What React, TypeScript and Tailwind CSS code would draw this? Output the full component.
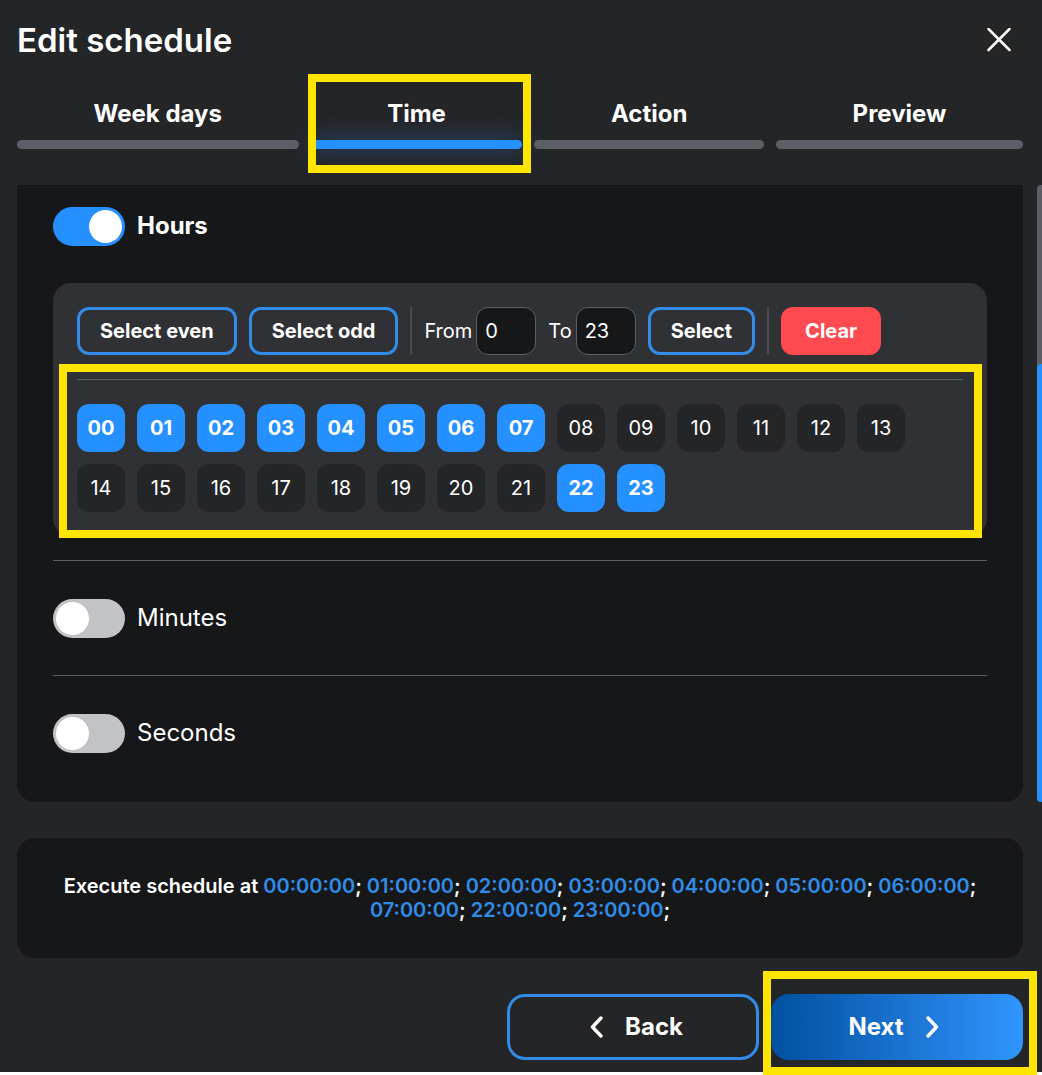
import { useState } from "react";

const tabs = ["Week days", "Time", "Action", "Preview"];
const hours = Array.from({ length: 24 }, (_, i) => String(i).padStart(2, "0"));
const initial = ["00", "01", "02", "03", "04", "05", "06", "07", "22", "23"];

function Highlight({ className }: { className: string }) {
  return (
    <span
      aria-hidden="true"
      className={`pointer-events-none absolute z-10 border-8 border-[#ffe600] ${className}`}
    />
  );
}

function Toggle({
  label,
  checked,
  onChange,
}: {
  label: string;
  checked: boolean;
  onChange: (v: boolean) => void;
}) {
  return (
    <label className="flex w-fit cursor-pointer items-center gap-3 text-2xl">
      <input
        type="checkbox"
        role="switch"
        checked={checked}
        onChange={(e) => onChange(e.target.checked)}
        className="h-[39px] w-[72px] appearance-none rounded-full bg-[#c2c3c7] p-[3px] before:block before:size-[33px] before:rounded-full before:bg-white checked:bg-[#2590ff] checked:before:ml-[33px]"
      />
      <span className={checked ? "pb-0.5 font-bold" : "pb-0.5"}>{label}</span>
    </label>
  );
}

function OutlineButton({ children, onClick }: { children: string; onClick: () => void }) {
  return (
    <button
      type="button"
      onClick={onClick}
      className="h-12 rounded-xl border-3 border-[#318ce7] px-5 font-bold"
    >
      {children}
    </button>
  );
}

const fieldClass =
  "h-12 w-[60px] rounded-xl border border-[#5d5f66] bg-[#161719] px-2 text-white";

export default function App() {
  const [tab, setTab] = useState("Time");
  const [selected, setSelected] = useState<string[]>(initial);
  const [from, setFrom] = useState("0");
  const [to, setTo] = useState("23");
  const [units, setUnits] = useState({ hours: true, minutes: false, seconds: false });

  const toggleHour = (h: string) =>
    setSelected((s) => (s.includes(h) ? s.filter((x) => x !== h) : [...s, h].sort()));

  return (
    <div className="bg-white pb-[3px]">
      <main className="bg-[#242527] pt-4 pb-3 font-['Inter',sans-serif] text-xl text-white">
        <header className="flex h-12 items-center justify-between pr-[27px] pl-[17px]">
          <h1 className="text-[33px] leading-10 font-semibold">Edit schedule</h1>
          <button type="button" aria-label="Close" className="p-1">
            <svg width="24" height="24" viewBox="0 0 24 24" fill="none" stroke="currentColor" strokeWidth="2.5" strokeLinecap="round">
              <path d="M1.5 1 22.5 22M22.5 1 1.5 22" />
            </svg>
          </button>
        </header>

        <div role="tablist" className="mt-8 flex gap-3 pr-[19px] pl-[17px]">
          {tabs.map((t) => (
            <button
              key={t}
              type="button"
              role="tab"
              aria-selected={t === tab}
              onClick={() => setTab(t)}
              className="relative flex flex-auto flex-col text-2xl font-bold"
            >
              <span className="w-full pt-0.5 pb-2.5">{t}</span>
              <span
                className={`h-[9px] w-full rounded-full ${
                  t === tab ? "bg-[#2590ff] shadow-[0_0_24px_#2590ff80]" : "bg-[#5d5f66]"
                }`}
              />
              {t === "Time" && <Highlight className="-top-[22px] -right-[9px] -bottom-6 -left-[3px]" />}
            </button>
          ))}
        </div>

        <div className="mt-9 flex">
          <section className="ml-[17px] flex-1 rounded-b-[18px] bg-[#161719] px-9 pt-[22px] pb-[49px]">
            <Toggle label="Hours" checked={units.hours} onChange={(v) => setUnits({ ...units, hours: v })} />

            <div className="relative mt-[37px] rounded-[18px] bg-[#303134] p-6">
              <div className="flex items-center gap-3">
                <OutlineButton onClick={() => setSelected(hours.filter((h) => +h % 2 === 0))}>
                  Select even
                </OutlineButton>
                <OutlineButton onClick={() => setSelected(hours.filter((h) => +h % 2 === 1))}>
                  Select odd
                </OutlineButton>
                <span className="h-12 w-0.5 bg-[#4b4c50]" />
                <label className="flex items-center gap-1">
                  From
                  <input value={from} onChange={(e) => setFrom(e.target.value)} className={fieldClass} />
                </label>
                <label className="flex items-center gap-1">
                  To
                  <input value={to} onChange={(e) => setTo(e.target.value)} className={fieldClass} />
                </label>
                <OutlineButton onClick={() => setSelected(hours.filter((h) => +h >= +from && +h <= +to))}>
                  Select
                </OutlineButton>
                <span className="h-12 w-0.5 bg-[#4b4c50]" />
                <button
                  type="button"
                  onClick={() => setSelected([])}
                  className="h-12 rounded-xl bg-[#ff4b50] px-6 font-bold"
                >
                  Clear
                </button>
              </div>
              <div className="mt-6 flex flex-wrap gap-3 border-t border-[#5d5f66] pt-6">
                {hours.map((h) => (
                  <button
                    key={h}
                    type="button"
                    aria-pressed={selected.includes(h)}
                    onClick={() => toggleHour(h)}
                    className={`size-12 rounded-xl ${
                      selected.includes(h) ? "bg-[#2590ff] font-bold" : "bg-[#242527]"
                    }`}
                  >
                    {h}
                  </button>
                ))}
              </div>
              <Highlight className="top-[81px] right-[5px] -bottom-[2px] left-1.5" />
            </div>

            <div className="mt-6 border-t border-[#5d5f66] pt-[38px]">
              <Toggle label="Minutes" checked={units.minutes} onChange={(v) => setUnits({ ...units, minutes: v })} />
            </div>
            <div className="mt-[37px] border-t border-[#5d5f66] pt-[38px]">
              <Toggle label="Seconds" checked={units.seconds} onChange={(v) => setUnits({ ...units, seconds: v })} />
            </div>
          </section>
          <div aria-hidden="true" className="ml-3.5 flex w-[5px] flex-col justify-end rounded-l-sm bg-[#5d5f66]">
            <div className="h-[71%] rounded-l-sm bg-[#2590ff]" />
          </div>
        </div>

        <p className="mt-9 mr-[19px] ml-[17px] rounded-[18px] bg-[#161719] px-9 py-9 text-center leading-6 font-semibold">
          Execute schedule at{" "}
          {selected.map((h) => (
            <span key={h}>
              <span className="text-[#318ce7]">{h}:00:00</span>;{" "}
            </span>
          ))}
        </p>

        <footer className="mt-9 flex justify-end gap-3 pr-[19px] text-2xl font-bold">
          <button
            type="button"
            className="flex h-[66px] w-[252px] items-center justify-center gap-5 rounded-[18px] border-3 border-[#318ce7]"
          >
            <svg width="22" height="24" viewBox="0 0 22 24" fill="none" stroke="currentColor" strokeWidth="3.4" strokeLinecap="round" strokeLinejoin="round">
              <path d="M18 3 9.5 12 18 21" />
            </svg>
            Back
          </button>
          <div className="relative flex">
            <button
              type="button"
              className="flex h-[66px] w-[252px] items-center justify-center gap-5 rounded-[18px] bg-linear-to-r from-[#0050a0] to-[#3095ff]"
            >
              Next
              <svg width="22" height="24" viewBox="0 0 22 24" fill="none" stroke="currentColor" strokeWidth="3.4" strokeLinecap="round" strokeLinejoin="round">
                <path d="M4 3 12.5 12 4 21" />
              </svg>
            </button>
            <Highlight className="-top-[23px] -right-[14px] -bottom-[15px] -left-2" />
          </div>
        </footer>
      </main>
    </div>
  );
}
